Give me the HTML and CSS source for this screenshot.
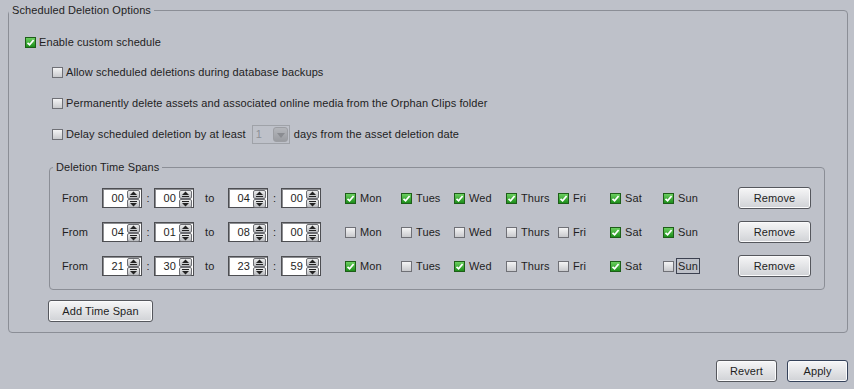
FILE: index.html
```html
<!DOCTYPE html>
<html lang="en">
<head>
    <meta charset="UTF-8">
    <title>Scheduled Deletion Options</title>
    <link rel="stylesheet" href="styles.css">
</head>
<body>
    <fieldset class="outer">
        <legend>Scheduled Deletion Options</legend>
        <div class="outer-body">
            <label class="opt main"><span class="cb on"></span>Enable custom schedule</label>
            <div class="subs">
                <label class="opt"><span class="cb"></span>Allow scheduled deletions during database backups</label>
                <label class="opt"><span class="cb"></span>Permanently delete assets and associated online media from the Orphan Clips folder</label>
                <div class="opt">
                    <span class="cb"></span>Delay scheduled deletion by at least
                    <span class="combo"><span class="combo-val">1</span><span class="combo-btn"></span></span>
                    days from the asset deletion date
                </div>
            </div>

            <fieldset class="spans">
                <legend>Deletion Time Spans</legend>
                <div class="span-grid" id="grid"></div>
            </fieldset>

            <button class="btn add" type="button">Add Time Span</button>
        </div>
    </fieldset>

    <div class="footer">
        <button class="btn" type="button">Revert</button>
        <button class="btn primary" type="button">Apply</button>
    </div>

    <script>
        const rows = [
            { from: ['00', '00'], to: ['04', '00'], days: [1, 1, 1, 1, 1, 1, 1] },
            { from: ['04', '01'], to: ['08', '00'], days: [0, 0, 0, 0, 0, 1, 1] },
            { from: ['21', '30'], to: ['23', '59'], days: [1, 0, 1, 0, 0, 1, 0] }
        ];
        const dayNames = ['Mon', 'Tues', 'Wed', 'Thurs', 'Fri', 'Sat', 'Sun'];
        const arrows = '<span class="spin-btns">' +
            '<span class="sb"><svg width="9" height="7" viewBox="0 0 9 7"><path d="M4.5 0.5 L8 4 L1 4 Z" fill="#222"/><rect x="1" y="5" width="7" height="1" fill="#222"/></svg></span>' +
            '<span class="sb"><svg width="9" height="7" viewBox="0 0 9 7"><rect x="1" y="1" width="7" height="1" fill="#222"/><path d="M1 3 L8 3 L4.5 6.5 Z" fill="#222"/></svg></span>' +
            '</span>';

        function spin(v) {
            return '<span class="spin"><span class="spin-val">' + v + '</span>' + arrows + '</span>';
        }

        const grid = document.getElementById('grid');
        let html = '';
        rows.forEach(function (r, i) {
            html += '<span class="lbl">From</span>' + spin(r.from[0]) + '<span class="colon">:</span>' + spin(r.from[1]) +
                '<span class="lbl to">to</span>' + spin(r.to[0]) + '<span class="colon">:</span>' + spin(r.to[1]) + '<span></span>';
            r.days.forEach(function (d, j) {
                const focus = (i === 2 && j === 6) ? ' focus' : '';
                html += '<label class="day"><span class="cb' + (d ? ' on' : '') + '"></span><span class="dname' + focus + '">' + dayNames[j] + '</span></label>';
            });
            html += '<button class="btn remove" type="button">Remove</button>';
        });
        grid.innerHTML = html;
    </script>
</body>
</html>
```

FILE: styles.css
```css
body {
    margin: 0;
    background-color: #bec1c9;
    font-family: "Liberation Sans", Arial, sans-serif;
    font-size: 11px;
    letter-spacing: 0.1px;
    color: #1e1e1e;
    width: 854px;
    height: 389px;
    overflow: hidden;
}

fieldset {
    border: 1px solid #8b8e96;
    border-radius: 4px;
    padding: 0;
    margin: 0;
    min-width: 0;
}
legend {
    padding: 0 3px;
    line-height: 13px;
    font-size: 11px;
}

.outer {
    margin: 4px 6px 0 8px;
}
.outer-body {
    padding: 15px 0 10px 16px;
}

.opt {
    display: flex;
    align-items: center;
    height: 20px;
    white-space: nowrap;
}
.opt .cb {
    margin-right: 3px;
}
.subs {
    margin-left: 27px;
    margin-top: 10px;
    display: flex;
    flex-direction: column;
    gap: 11px;
}

/* checkboxes */
.cb {
    display: inline-block;
    box-sizing: border-box;
    width: 11px;
    height: 11px;
    border: 1px solid #6f7076;
    background: linear-gradient(#f4f4f5, #c9cacd);
    flex-shrink: 0;
}
.cb.on {
    border-color: #1d5e18;
    background:
        url("data:image/svg+xml,%3Csvg xmlns='http://www.w3.org/2000/svg' width='9' height='9' viewBox='0 0 9 9'%3E%3Cpath d='M1.5 4.8 L3.6 6.8 L7.6 2' stroke='white' stroke-width='1.8' fill='none'/%3E%3C/svg%3E") center / 9px 9px no-repeat,
        linear-gradient(#6bcf5f, #1c8e1a);
}

/* disabled combo */
.combo {
    display: inline-flex;
    align-items: center;
    box-sizing: border-box;
    width: 38px;
    height: 19px;
    margin: 0 4px 0 6px;
    border: 1px solid #9fa2a8;
    padding: 0 1px 0 3px;
}
.combo-val {
    flex: 1;
    color: #8d9096;
}
.combo-btn {
    width: 15px;
    height: 15px;
    border-radius: 3px;
    background: linear-gradient(#b4b6bb, #9a9ca1) ;
    border: 1px solid #9c9ea3;
    box-sizing: border-box;
    position: relative;
}
.combo-btn::after {
    content: "";
    position: absolute;
    left: 3px;
    top: 5px;
    border-left: 4px solid transparent;
    border-right: 4px solid transparent;
    border-top: 5px solid #8a8c91;
}

/* time spans */
.spans {
    width: 776px;
    box-sizing: border-box;
    margin: 17px 0 0 24px;
}
.spans legend {
    margin-left: 3px;
}
.span-grid {
    display: grid;
    grid-template-columns: 40px 40px 12px 40px 34px 40px 13px 40px 24px 56px 53px 52px 52px 52px 53px 75px 73px;
    grid-auto-rows: 20px;
    row-gap: 14px;
    align-items: center;
    padding: 14px 0 13px 12px;
}
.lbl.to {
    padding-left: 11px;
}
.colon {
    text-align: center;
}

.spin {
    display: flex;
    box-sizing: border-box;
    width: 40px;
    height: 20px;
    border: 1px solid #4d4e52;
    box-shadow: inset 1px 1px 0 #8d8e92;
    background: #fff;
}
.spin-val {
    flex: 1;
    text-align: right;
    padding-right: 3px;
    line-height: 18px;
}
.spin-btns {
    display: flex;
    flex-direction: column;
    width: 13px;
    padding: 1px 1px 1px 0;
    gap: 0;
}
.sb {
    flex: 1;
    display: flex;
    align-items: center;
    justify-content: center;
    border: 1px solid #6d6e73;
    border-radius: 2px;
    background: linear-gradient(#eceded, #b9bbbf);
}

.day {
    display: flex;
    align-items: center;
    white-space: nowrap;
}
.day .cb {
    margin-right: 2px;
}
.dname {
    padding: 1px;
    border: 1px solid transparent;
}
.dname.focus {
    border-color: #3c4150;
}

/* buttons */
.btn {
    font-family: "Liberation Sans", Arial, sans-serif;
    font-size: 11px;
    letter-spacing: 0.1px;
    color: #1e1e1e;
    height: 22px;
    border: 1px solid #55575d;
    border-radius: 3px;
    background: linear-gradient(#f6f6f7, #d0d2d6);
    box-shadow: inset 0 0 0 1px #fbfbfc;
    padding: 0;
}
.remove {
    width: 73px;
}
.add {
    display: block;
    width: 105px;
    margin: 10px 0 0 23px;
}

.footer {
    display: flex;
    justify-content: flex-end;
    gap: 10px;
    margin: 27px 6px 0 0;
}
.footer .btn {
    width: 61px;
}
.footer .primary {
    border-color: #35425a;
}
```
